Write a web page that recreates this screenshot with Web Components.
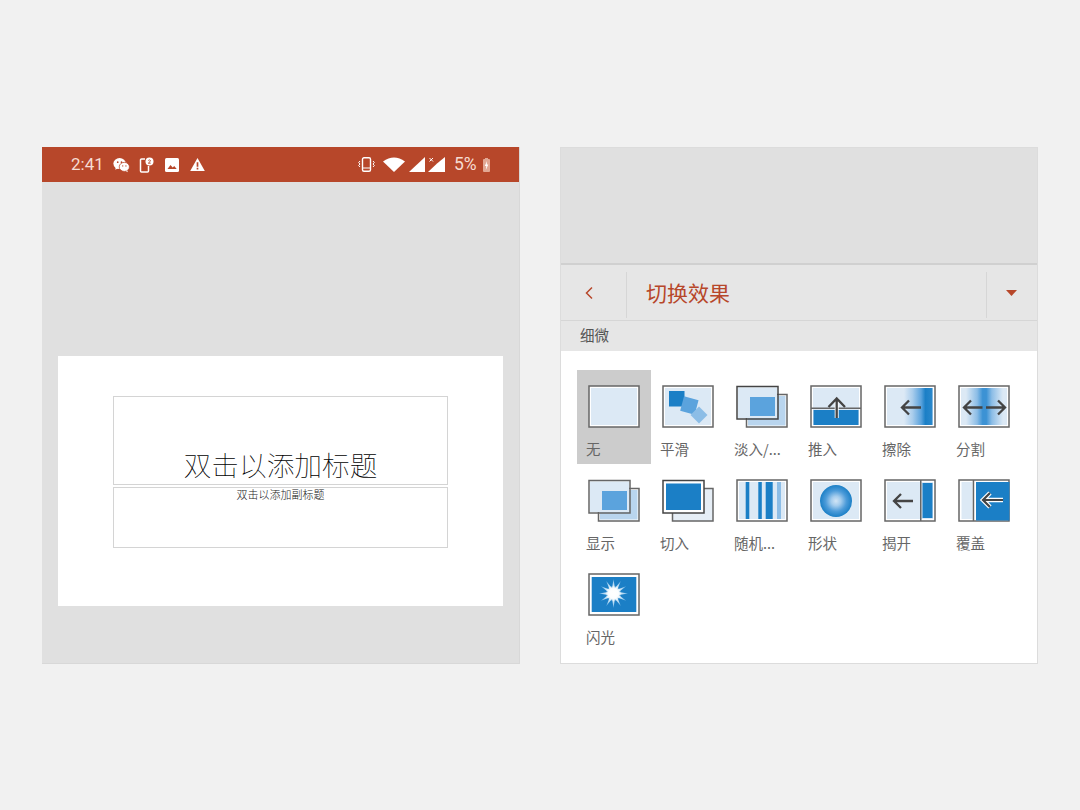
<!DOCTYPE html>
<html lang="zh">
<head>
<meta charset="utf-8">
<title>PowerPoint 切换效果</title>
<style>
html,body{margin:0;padding:0;background:#f1f1f1;}
body{width:1080px;height:810px;overflow:hidden;font-family:"Noto Sans CJK SC","Noto Sans",sans-serif;}
</style>
</head>
<body>
<ppt-app></ppt-app>
<script>
const def=(name,html,extra)=>{
  customElements.define(name,class extends HTMLElement{
    constructor(){super();this.attachShadow({mode:'open'}).innerHTML=html;}
    connectedCallback(){if(extra)extra(this);}
  });
};

def('status-bar',`<style>
:host{display:flex;align-items:center;height:35px;background:#b7472a;color:#f6dcd2;font:17px/35px Roboto,sans-serif;padding:0 29px 0 28px;box-sizing:border-box;flex:none}
svg{display:block;flex:none}
.time{width:42px;padding-left:1px;box-sizing:border-box}
.pct{margin-left:9px;width:29px;font-size:17.5px}
.sp{flex:1}
</style>
<span class="time">2:41</span>
<svg width="17" height="16" viewBox="0 0 18 16" style="margin-left:1px"><ellipse cx="7" cy="6.5" rx="6.6" ry="5.8" fill="#fff"/><path d="M3 10l-.6 3 3-1.6z" fill="#fff"/><ellipse cx="12" cy="10" rx="5.4" ry="4.8" fill="#fff" stroke="#b7472a" stroke-width=".8"/><path d="M15 13.6l.8 2-2.4-1.2z" fill="#fff"/><circle cx="5" cy="5" r=".9" fill="#b7472a"/><circle cx="9" cy="5" r=".9" fill="#b7472a"/><circle cx="10.3" cy="9" r=".7" fill="#b7472a"/><circle cx="13.7" cy="9" r=".7" fill="#b7472a"/></svg>
<svg width="15" height="16" viewBox="0 0 15 16" style="margin-left:9px"><path d="M6 2H2.500a1 1 0 0 0-1 1v11a1 1 0 0 0 1 1h6a1 1 0 0 0 1-1V9" fill="none" stroke="#fff" stroke-width="1.500"/><circle cx="10.500" cy="4.500" r="4" fill="#fff"/><path d="M9.300 3.500q1.200-1.200 2.200 0q.2.800-2.200 2.700h2.400" fill="none" stroke="#b7472a" stroke-width=".9"/></svg>
<svg width="14" height="14" viewBox="0 0 14 14" style="margin-left:11px"><rect width="14" height="14" rx="1.500" fill="#fff"/><path d="M2.500 11l3-4 2.200 2.500 1.500-1.500 2.500 3z" fill="#b7472a"/></svg>
<svg width="15" height="15" viewBox="0 0 16 15" style="margin-left:11px"><path d="M8 .5L15.800 14.500H.2z" fill="#fff"/><path d="M7.100 5h1.800v5H7.100zM7.100 11h1.800v1.800H7.100z" fill="#b7472a"/></svg>
<span class="sp"></span>
<svg width="17" height="15" viewBox="0 0 17 15"><rect x="4.500" y=".8" width="8" height="13.400" rx="1.500" fill="none" stroke="#fff" stroke-width="1.400"/><path d="M4.500 11h8" stroke="#fff" stroke-width="1"/><path d="M2 4L.7 5.500 2 7 .7 8.500 2 10M15 4l1.300 1.500L15 7l1.300 1.500L15 10" fill="none" stroke="#fff"/></svg>
<svg width="22" height="15" viewBox="0 0 22 15" style="margin-left:8px"><path d="M0 4.500Q11-3.500 22 4.500L11 15z" fill="#fff"/></svg>
<svg width="16" height="15" viewBox="0 0 16 15" style="margin-left:4px"><path d="M16 0V15H0z" fill="#fff"/></svg>
<svg width="17" height="15" viewBox="0 0 17 15" style="margin-left:3px"><path d="M17 0V15H0L9 6.500z" fill="#fff"/><path d="M1.500 1l3.500 3.500M5 1L1.500 4.500" stroke="#fff" stroke-width="1"/></svg>
<span class="pct">5%</span>
<svg width="7" height="14" viewBox="0 0 7 14"><rect y="1" width="7" height="13" rx="1" fill="#e2a894"/><rect x="2" width="3" height="1.500" fill="#e2a894"/><path d="M4 3L1.800 8H3.300L2.800 12 5.300 6.500H3.800z" fill="#fff"/></svg>`);

def('slide-canvas',`<style>
:host{display:flex;flex-direction:column;gap:2px;width:445px;height:250px;box-sizing:border-box;background:#fff;padding:40px 55px 57px;margin:174px 0 0 16px;flex:none;color:#222}
.box{border:1px solid #d4d4d4;box-sizing:border-box;display:flex;justify-content:center;text-align:center}
.title{height:89px;align-items:flex-end;font:100 27.7px/1 "Noto Sans CJK SC",sans-serif;padding-bottom:5px;color:#000}
.sub{height:61px;font:300 11px/12px "Noto Sans CJK SC",sans-serif;padding-top:0;color:#222}
</style>
<div class="box title"><slot name="title"></slot></div>
<div class="box sub"><slot name="sub"></slot></div>`);

def('phone-pane',`<style>
:host{display:flex;flex-direction:column;width:478px;height:517px;box-sizing:border-box;background:#e0e0e0;border-right:1px solid #d8d8d8;border-bottom:1px solid #d8d8d8;flex:none}
</style>
<status-bar></status-bar>
<slide-canvas><span slot="title">双击以添加标题</span><span slot="sub">双击以添加副标题</span></slide-canvas>`);

const F='#dce9f5',B='#1b7fc6',M='#5ba3dd',L='#b9d5ee',K='#8cbde6',G='#666',A='#444';
const frame=(inner='',fill='#fff')=>`<rect x="2" y="2" width="50" height="41" fill="${fill}" stroke="${G}" stroke-width="1.500"/>${inner}`;
const bg=`<rect x="4" y="4" width="46" height="37" fill="${F}"/>`;
const arrow=(x1,x2,y,c=A,w=2.300)=>{const d=x1<x2?-1:1;return `<path d="M${x1} ${y}H${x2}M${x2+d*7} ${y-7}L${x2} ${y}L${x2+d*7} ${y+7}" fill="none" stroke="${c}" stroke-width="${w}"/>`;};
const layered=c=>`<rect x="11.500" y="10.500" width="40.500" height="32.500" fill="#fff" stroke="${G}" stroke-width="1.500"/><rect x="13" y="12" width="37.500" height="29.500" fill="${L}"/><rect x="3" y="3.500" width="39" height="30.500" fill="${F}"/><rect x="2" y="2.500" width="41" height="32.500" fill="none" stroke="${c}" stroke-width="1.500"/><rect x="15" y="13" width="25" height="19" fill="${M}"/>`;
const ICONS={
 none:()=>frame(bg),
 smooth:()=>frame(bg+`<rect x="8" y="7" width="15.500" height="15.500" fill="${B}"/><rect x="20.800" y="14" width="15" height="15" fill="${M}" transform="rotate(15 28.300 21.700)"/><rect x="32" y="25" width="12" height="12" fill="${K}" transform="rotate(45 38 31)"/>`),
 fade:()=>layered('#444'),
 push:()=>frame(bg+`<rect x="2" y="23.500" width="50" height="1.500" fill="${G}"/><rect x="4.500" y="26" width="45" height="15" fill="${B}"/><path d="M27.700 34V14" stroke="#fff" stroke-width="4"/><path d="M27.700 34V14M19.500 23L27.700 14.500L36 23" fill="none" stroke="${A}" stroke-width="2.300"/>`),
 wipe:()=>frame(bg+`<rect x="21" y="4" width="28.500" height="37" fill="url(#gw)"/>`+arrow(38,19,23.500)),
 split:()=>frame(bg+`<rect x="9" y="4" width="37" height="37" fill="url(#gs)"/>`+arrow(25.500,7,23.500)+arrow(29,48,23.500)),
 show:()=>layered(G),
 cut:()=>`<rect x="11.500" y="10.500" width="40.500" height="32.500" fill="#e6eef6" stroke="${G}" stroke-width="1.500"/><rect x="2" y="2.500" width="41" height="32.500" fill="#fff" stroke="#444" stroke-width="1.500"/><rect x="5" y="5.500" width="35" height="26.500" fill="${B}"/>`,
 random:()=>frame(bg+`<rect x="10.700" y="4" width="3.600" height="37" fill="${B}"/><rect x="23.300" y="4" width="3.500" height="37" fill="${B}"/><rect x="30.700" y="4" width="7" height="37" fill="${B}"/><rect x="42" y="4" width="4" height="37" fill="${K}"/>`),
 shape:()=>frame(bg+`<circle cx="27" cy="23" r="16" fill="url(#gc)"/>`),
 reveal:()=>frame(bg+`<rect x="37" y="2" width="1.500" height="41" fill="${G}"/><rect x="39.500" y="5" width="10" height="35" fill="${B}"/>`+arrow(30,11,23)),
 cover:()=>frame(`<rect x="4.500" y="4" width="11" height="37" fill="${F}"/><rect x="15.700" y="2" width="1.500" height="41" fill="${G}"/><rect x="19" y="4" width="33.500" height="38.500" fill="${B}"/>`+arrow(46,26,22,'#fff',4.500)+arrow(46,26,22,A,2.200)),
 flash:()=>frame(`<rect x="4.700" y="5" width="44.600" height="35" fill="${B}"/>`+(()=>{let p=[];for(let i=0;i<24;i++){const r=i%2?5.500:14.500,a=i*Math.PI/12;p.push((26.500+r*Math.cos(a)).toFixed(1)+','+(21.500+r*Math.sin(a)).toFixed(1));}return `<polygon points="${p.join(' ')}" fill="url(#gf)"/><circle cx="26.500" cy="21.500" r="8" fill="url(#gg)"/>`;})())
};
const defs=`<defs>
<linearGradient id="gw"><stop offset="0" stop-color="${F}"/><stop offset=".3" stop-color="#a9cdec"/><stop offset=".6" stop-color="${M}"/><stop offset=".75" stop-color="${B}"/><stop offset="1" stop-color="#2a88cc"/></linearGradient>
<linearGradient id="gs"><stop offset="0" stop-color="${F}"/><stop offset=".3" stop-color="${K}"/><stop offset=".45" stop-color="#3c92d4"/><stop offset=".55" stop-color="#3c92d4"/><stop offset=".7" stop-color="${K}"/><stop offset="1" stop-color="${F}"/></linearGradient>
<radialGradient id="gc"><stop offset="0" stop-color="#d2e5f5"/><stop offset=".3" stop-color="#a4cced"/><stop offset=".65" stop-color="#4c9bd9"/><stop offset="1" stop-color="#1b7fc6"/></radialGradient>
<radialGradient id="gf"><stop offset="0" stop-color="#fff"/><stop offset=".5" stop-color="#d5eaf8"/><stop offset="1" stop-color="#6db3e6"/></radialGradient>
<radialGradient id="gg"><stop offset="0" stop-color="#fff"/><stop offset=".6" stop-color="#fff" stop-opacity=".9"/><stop offset="1" stop-color="#fff" stop-opacity="0"/></radialGradient>
</defs>`;

def('transition-tile',`<style>
:host{display:block;width:74px;height:94px;box-sizing:border-box;padding:14px 0 0 10px;color:#666;font:14.500px/20px "Noto Sans CJK SC",sans-serif;white-space:nowrap}
:host([selected]){background:#cccccc}
svg{display:block;margin-bottom:9px}
.t{display:block;margin-left:-1px}
</style><svg width="54" height="46" viewBox="0 0 54 46"></svg><span class="t"><slot></slot></span>`,el=>{
  el.shadowRoot.querySelector('svg').innerHTML=defs+ICONS[el.getAttribute('icon')]();
});

def('transition-pane',`<style>
:host{display:flex;flex-direction:column;width:478px;height:517px;box-sizing:border-box;border:1px solid #dcdcdc;background:#fff;flex:none}
.top{height:115px;background:#e0e0e0;border-bottom:2px solid #d0d0d0;flex:none}
.bar{height:56px;background:#e6e6e6;border-bottom:1px solid #d6d6d6;display:flex;align-items:center;flex:none;box-sizing:border-box}
.back{width:66px;height:100%;display:flex;align-items:center;justify-content:center;position:relative;box-sizing:border-box;padding-right:11px}
.back::after,.drop::before{content:"";position:absolute;top:7px;bottom:2px;width:1px;background:#d6d6d6}
.back::after{right:0}
.drop::before{left:0}
h1{margin:0;flex:1;font:400 21px/1 "Noto Sans CJK SC",sans-serif;color:#b7472a;padding-left:19px}
.drop{width:51px;height:100%;position:relative;display:flex;align-items:center;justify-content:center;box-sizing:border-box}
.sec{height:30px;background:#e6e6e6;font:14.500px/28px "Noto Sans CJK SC",sans-serif;color:#555;padding-left:19px;box-sizing:border-box;flex:none}
.grid{display:grid;grid-template-columns:repeat(6,74px);grid-auto-rows:94px;padding:19px 0 0 16px}
</style>
<div class="top"></div>
<div class="bar">
  <div class="back"><svg width="10" height="14" viewBox="0 0 10 14"><path d="M8 1.500L2.500 7 8 12.500" fill="none" stroke="#b7472a" stroke-width="1.500"/></svg></div>
  <h1>切换效果</h1>
  <div class="drop"><svg width="11" height="6" viewBox="0 0 11 6"><path d="M0 0H11L5.500 6z" fill="#b7472a"/></svg></div>
</div>
<div class="sec">细微</div>
<div class="grid"><slot></slot></div>`);

const tiles=[['none','无'],['smooth','平滑'],['fade','淡入/...'],['push','推入'],['wipe','擦除'],['split','分割'],['show','显示'],['cut','切入'],['random','随机...'],['shape','形状'],['reveal','揭开'],['cover','覆盖'],['flash','闪光']];
def('ppt-app',`<style>
:host{display:flex;gap:40px;padding:147px 0 0 42px;box-sizing:border-box;width:1080px;height:810px;background:#f1f1f1}
</style>
<phone-pane></phone-pane>
<transition-pane>${tiles.map(([i,t],n)=>`<transition-tile icon="${i}"${n?'':' selected'}>${t}</transition-tile>`).join('')}</transition-pane>`);
</script>
</body>
</html>
